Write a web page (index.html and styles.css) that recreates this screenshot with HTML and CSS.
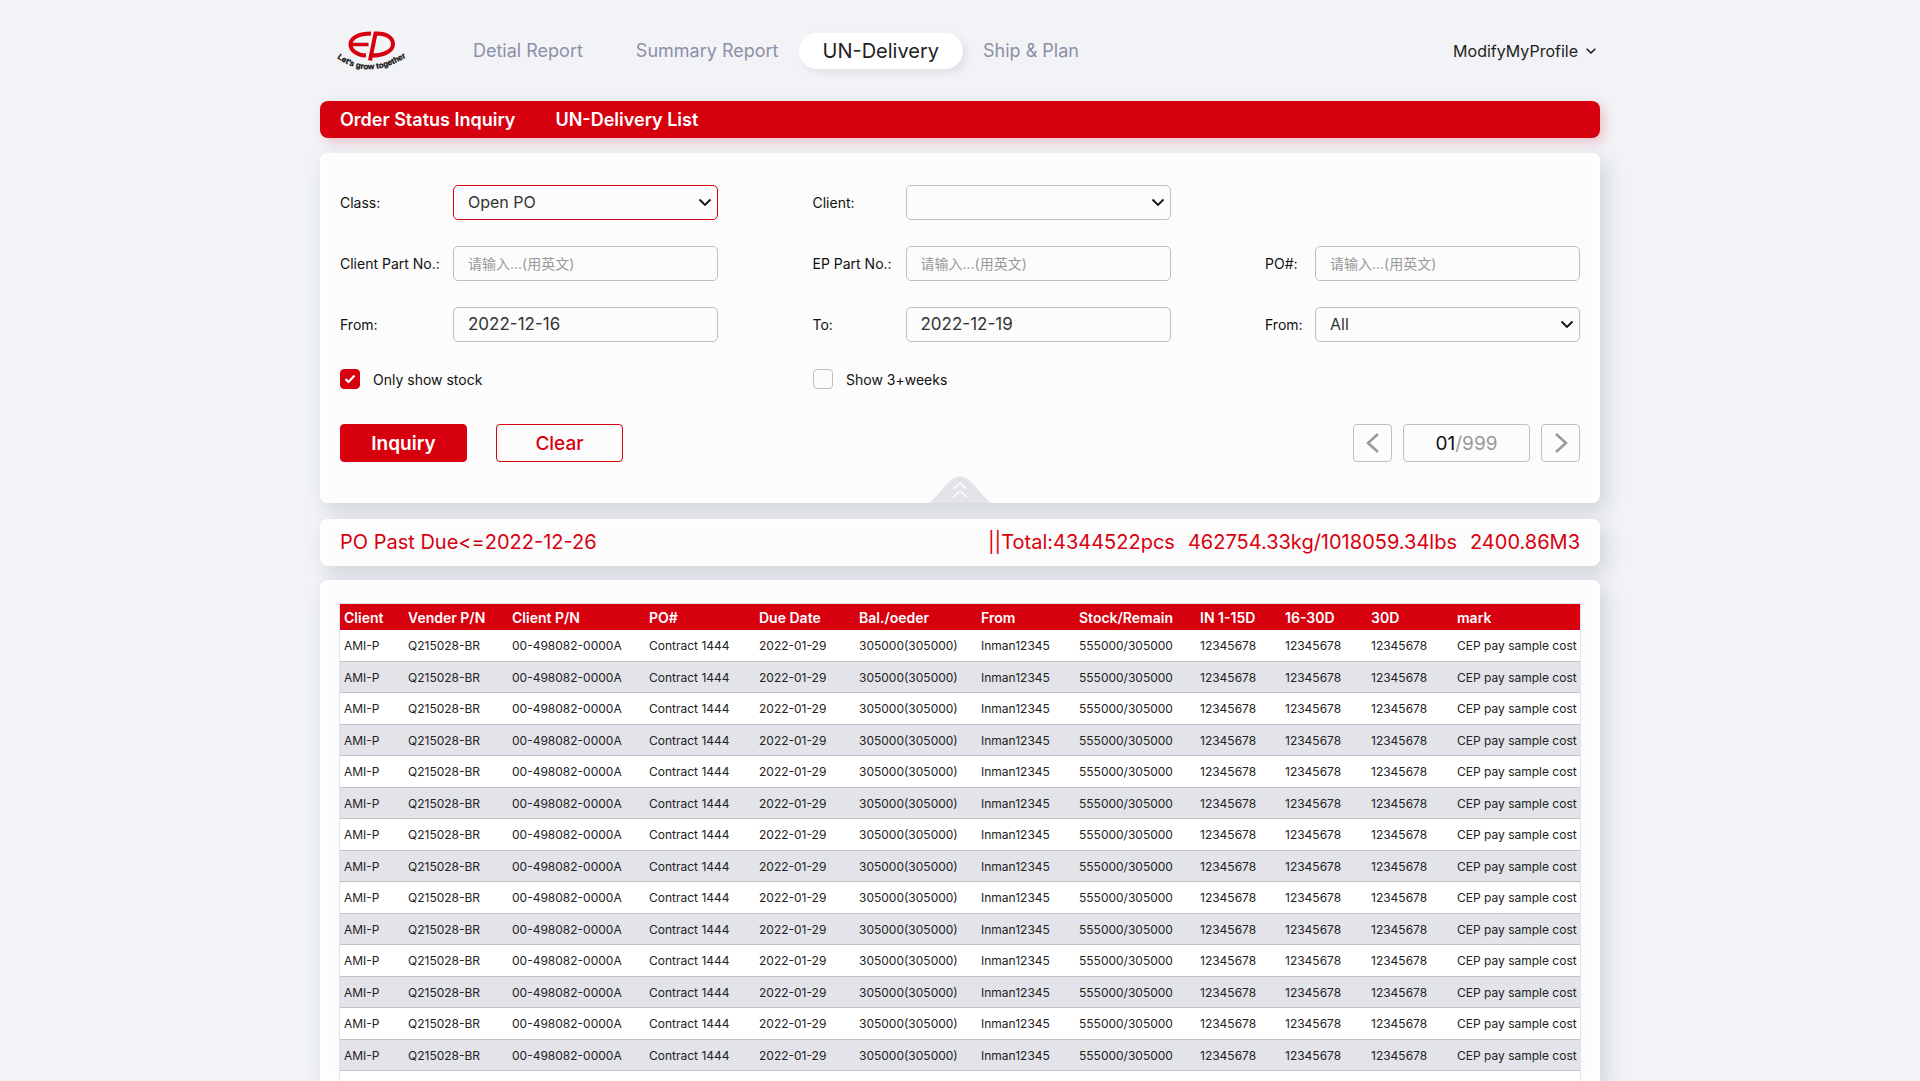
FILE: index.html
```html
<!DOCTYPE html>
<html lang="en">
<head>
<meta charset="utf-8">
<title>UN-Delivery List</title>
<link rel="stylesheet" href="styles.css">
</head>
<body>
<div class="page">
  <header class="header">
    <a class="logo" href="#" aria-label="EP home">
      <svg width="72" height="48" viewBox="0 0 72 48">
        <g fill="none" stroke="#d7000f" stroke-width="4">
          <path d="M35 6.500C23 6.500 14.500 11 14.500 17.500C14.500 23.500 21 28 30 28.500"/>
          <path d="M15 17.500H32.500" stroke-width="3.500"/>
          <path d="M34 33.500L39.500 6.500C51 6 57 11 57 17C57 24 48 28.500 36 28.500"/>
        </g>
        <path id="arc" d="M1 31Q33 54 70 30" fill="none"/>
        <text class="logo-text"><textPath href="#arc">Let’s grow together</textPath></text>
      </svg>
    </a>
    <nav class="nav">
      <a href="#">Detial Report</a>
      <a href="#">Summary Report</a>
      <a class="active" href="#">UN-Delivery</a>
      <a href="#">Ship &amp; Plan</a>
    </nav>
    <button class="profile" type="button">ModifyMyProfile
      <svg width="10" height="6" viewBox="0 0 10 6"><path d="M.7 .7L5 5L9.300 .7" fill="none" stroke="#111" stroke-width="1.400"/></svg>
    </button>
  </header>

  <div class="titlebar"><span>Order Status Inquiry</span><span>UN-Delivery List</span></div>

  <form class="panel filters">
    <div class="fields">
      <div class="column wide">
        <label for="class">Class:</label>
        <select id="class" class="focused"><option>Open PO</option></select>
        <label for="client-part">Client Part No.:</label>
        <input id="client-part" type="text" placeholder="请输入...(用英文)">
        <label for="date-from">From:</label>
        <input id="date-from" class="date" type="text" value="2022-12-16">
      </div>
      <div class="column medium">
        <label for="client">Client:</label>
        <select id="client"><option></option></select>
        <label for="ep-part">EP Part No.:</label>
        <input id="ep-part" type="text" placeholder="请输入...(用英文)">
        <label for="date-to">To:</label>
        <input id="date-to" class="date" type="text" value="2022-12-19">
      </div>
      <div class="column narrow">
        <label for="po">PO#:</label>
        <input id="po" type="text" placeholder="请输入...(用英文)">
        <label for="origin">From:</label>
        <select id="origin"><option>All</option></select>
      </div>
    </div>
    <div class="checks">
      <label><input type="checkbox" checked>Only show stock</label>
      <label><input type="checkbox">Show 3+weeks</label>
    </div>
    <div class="actions">
      <button class="btn primary" type="button">Inquiry</button>
      <button class="btn" type="button">Clear</button>
      <div class="pager">
        <button type="button" aria-label="Previous page"><svg width="14" height="20" viewBox="0 0 14 20"><path d="M12 1L2 10L12 19" fill="none" stroke="#999" stroke-width="2.500"/></svg></button>
        <div class="count"><b>01</b>/999</div>
        <button type="button" aria-label="Next page"><svg width="14" height="20" viewBox="0 0 14 20"><path d="M2 1L12 10L2 19" fill="none" stroke="#999" stroke-width="2.500"/></svg></button>
      </div>
    </div>
    <button class="collapse" type="button" aria-label="Collapse filters">
      <svg width="60" height="27" viewBox="0 0 60 27"><path d="M0 27L18 7Q30 -6 42 7L60 27Z" fill="#e3e4e9"/><path d="M23.500 13L30 7L36.500 13M23.500 21L30 15L36.500 21" fill="none" stroke="#fff" stroke-width="1.500"/></svg>
    </button>
  </form>

  <div class="panel summary">
    <span>PO Past Due&lt;=2022-12-26</span>
    <div class="totals"><span>||Total:4344522pcs</span><span>462754.33kg/1018059.34lbs</span><span>2400.86M3</span></div>
  </div>

  <main class="panel list">
    <table>
      <colgroup><col class="c1"><col class="c2"><col class="c3"><col class="c4"><col class="c5"><col class="c6"><col class="c7"><col class="c8"><col class="c9"><col class="c10"><col class="c11"><col class="c12"></colgroup>
      <thead><tr><th>Client</th><th>Vender P/N</th><th>Client P/N</th><th>PO#</th><th>Due Date</th><th>Bal./oeder</th><th>From</th><th>Stock/Remain</th><th>IN 1-15D</th><th>16-30D</th><th>30D</th><th>mark</th></tr></thead>
      <tbody id="rows"></tbody>
    </table>
  </main>
</div>
<script src="app.js"></script>
</body>
</html>
```
FILE: styles.css
```css
* { box-sizing: border-box; }
body {
  margin: 0;
  background: #f1f3f7;
  color: #111;
  font-family: Inter, "Noto Sans CJK SC", sans-serif;
  font-size: 14px;
}
a { text-decoration: none; color: inherit; }
button, input, select { font: inherit; color: inherit; margin: 0; }
button { padding: 0; border: 0; background: none; cursor: pointer; }
svg { display: block; }

.page {
  display: flex;
  flex-direction: column;
  height: 100vh;
  max-width: 1280px;
  margin: 0 auto;
}

.header { flex: none; display: flex; align-items: center; height: 101px; padding: 0 4px 0 16px; }
.logo { margin-right: 45px; }
.logo-text { font: bold 8px "Liberation Sans Narrow", "Liberation Sans", sans-serif; fill: #111; stroke: #111; stroke-width: .3px; }
.nav { display: flex; align-items: center; font-size: 18px; color: #8f8fa8; }
.nav a { padding: 0 20px; line-height: 36px; }
.nav a:nth-child(1) { margin-right: 13px; }
.nav .active {
  padding: 0 24px;
  border-radius: 18px;
  background: #fff;
  color: #222;
  font-size: 20px;
  box-shadow: 4px 4px 8px rgba(0, 0, 0, .08);
}
.profile { display: flex; align-items: center; gap: 8px; margin-left: auto; font-size: 16px; color: #222; }

.titlebar {
  flex: none;
  display: flex;
  gap: 40px;
  padding: 0 20px;
  border-radius: 8px;
  background: #d7000f;
  color: #fff;
  font-size: 18px;
  font-weight: 600;
  line-height: 37px;
  box-shadow: 4px 4px 12px rgba(215, 0, 15, .2);
}

.panel {
  position: relative;
  flex: none;
  border-radius: 8px;
  background: #fcfcfc;
  box-shadow: 6px 8px 20px rgba(60, 65, 80, .18), inset 0 0 16px #fff;
}

.filters { margin-top: 15px; padding: 32px 20px 41px; }
.fields { display: flex; justify-content: space-between; }
.column { display: grid; row-gap: 26px; grid-auto-rows: 35px; align-items: center; }
.wide { grid-template-columns: 113px 265px; }
.medium { grid-template-columns: 93px 265px; }
.narrow { grid-template-columns: 50px 265px; align-content: end; }

.column input, .column select {
  width: 100%;
  height: 35px;
  padding: 0 14px 1px;
  border: 1px solid #c0c0c4;
  border-radius: 5px;
  background: #fcfcfc;
  color: #333;
  font-size: 16px;
  outline: 0;
}
.column .date { font-size: 17px; }
.column input::placeholder { color: #999; font-size: 14px; }
.column select {
  appearance: none;
  background: #fcfcfc url("data:image/svg+xml,%3Csvg xmlns='http://www.w3.org/2000/svg' width='14' height='9'%3E%3Cpath d='M1.500 1.500L7 7L12.500 1.500' fill='none' stroke='%23111' stroke-width='1.800'/%3E%3C/svg%3E") no-repeat right 5px center;
}
.column select.focused { border-color: #d7000f; }

.checks { display: grid; grid-template-columns: 473px 1fr; margin-top: 27px; }
.checks label { display: flex; align-items: center; gap: 13px; }
.checks input {
  appearance: none;
  width: 20px;
  height: 20px;
  border: 1px solid #c0c0c4;
  border-radius: 4px;
}
.checks input:checked {
  border-color: #d7000f;
  background: #d7000f url("data:image/svg+xml,%3Csvg xmlns='http://www.w3.org/2000/svg' width='12' height='10'%3E%3Cpath d='M1.500 5L4.500 8L10.500 1.500' fill='none' stroke='white' stroke-width='2.200'/%3E%3C/svg%3E") no-repeat center;
}

.actions { display: flex; gap: 29px; margin-top: 35px; }
.btn {
  width: 127px;
  height: 38px;
  border: 1px solid #d7000f;
  border-radius: 4px;
  color: #d7000f;
  font-size: 19px;
  font-weight: 500;
}
.btn.primary { background: #d7000f; color: #fff; font-weight: 600; }
.pager { display: flex; gap: 11px; margin-left: auto; }
.pager button, .count {
  display: flex;
  align-items: center;
  justify-content: center;
  width: 39px;
  height: 38px;
  border: 1px solid #c0c0c4;
  border-radius: 4px;
}
.count { width: 127px; color: #999; font-size: 19px; }
.count b { color: #111; font-weight: 400; }
.collapse { position: absolute; bottom: 0; left: 50%; margin-left: -30px; }

.summary {
  display: flex;
  justify-content: space-between;
  margin-top: 16px;
  padding: 0 20px;
  color: #d7000f;
  font-size: 20px;
  line-height: 47px;
}
.totals { display: flex; gap: 13px; }

.list {
  flex: 1 1 0;
  min-height: 0;
  margin-top: 14px;
  padding: 24px 20px 0;
  border-radius: 8px 8px 0 0;
  overflow-y: auto;
  scrollbar-width: none;
}
table { width: 100%; table-layout: fixed; border-collapse: separate; border-spacing: 0; background: #fff; box-shadow: 0 0 0 1px #e3e4e9; }
th, td { padding: 0 0 0 4px; text-align: left; white-space: nowrap; }
th { height: 26px; background: #d7000f; color: #fff; font-size: 14px; font-weight: 600; }
td { height: 32px; border-bottom: 1px solid #c0c2c8; font-size: 12px; color: #222; }
tbody tr:nth-child(even) td { height: 31px; background: #e3e4e9; }
.c1 { width: 64px; }
.c2 { width: 104px; }
.c3 { width: 137px; }
.c4 { width: 110px; }
.c5 { width: 100px; }
.c6 { width: 122px; }
.c7 { width: 98px; }
.c8 { width: 121px; }
.c9 { width: 85px; }
.c10, .c11 { width: 86px; }
.c12 { width: 127px; }
```
FILE: app.js
```js
const order = ["AMI-P", "Q215028-BR", "00-498082-0000A", "Contract 1444", "2022-01-29", "305000(305000)",
  "Inman12345", "555000/305000", "12345678", "12345678", "12345678", "CEP pay sample cost"];
const body = document.getElementById("rows");
for (let i = 0; i < 15; i++) {
  const row = body.insertRow();
  for (const value of order) row.insertCell().textContent = value;
}
```
